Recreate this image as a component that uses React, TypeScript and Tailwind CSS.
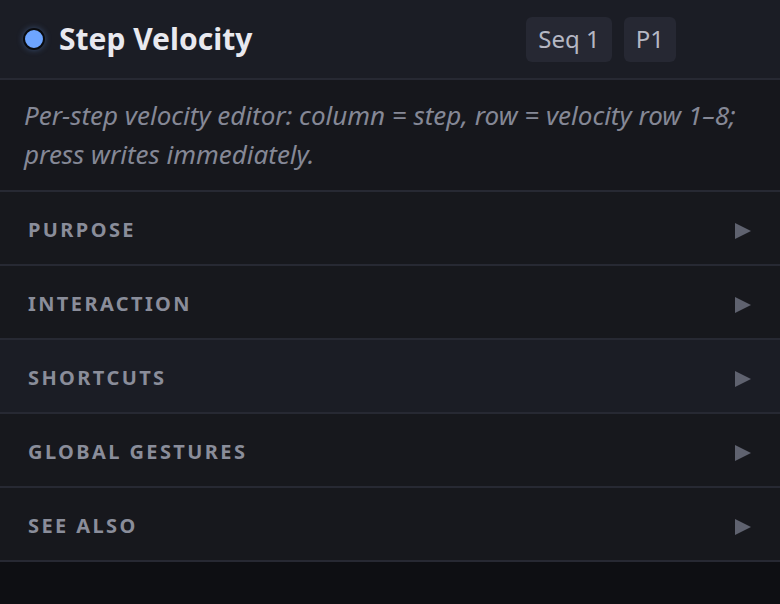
import React from "react";

const sections = ["Purpose", "Interaction", "Shortcuts", "Global Gestures", "See Also"];

function Arrow() {
  return (
    <svg width="16" height="16" viewBox="0 0 16 16" className="shrink-0 mt-[6px]">
      <polygon points="0,0 16,8 0,16" fill="#5f626f" />
    </svg>
  );
}

export default function App() {
  return (
    <div
      className="w-[780px] h-[604px] bg-[#0e0f13] flex flex-col overflow-hidden"
      style={{ fontFamily: '"Noto Sans", "Open Sans", sans-serif' }}
    >
      <div className="h-[80px] shrink-0 bg-[#1b1d25] border-b-2 border-[#272933] flex items-center pl-[23px] pr-[104px]">
        <div className="w-[22px] h-[22px] rounded-full bg-[#6ea5ff] border-2 border-[#0a0b0e] shadow-[0_0_6px_rgba(110,165,255,0.35)] shrink-0" />
        <div className="ml-[14px] flex-1 text-[30px] font-bold text-[#e9e9ef] leading-none">
          Step Velocity
        </div>
        <div className="flex gap-3">
          <div className="h-[45px] px-[12px] rounded-md bg-[#262833] text-[#b5b7c3] text-[24px] flex items-center">
            Seq 1
          </div>
          <div className="h-[45px] px-[12px] rounded-md bg-[#262833] text-[#b5b7c3] text-[24px] flex items-center">
            P1
          </div>
        </div>
      </div>
      <div className="h-[112px] shrink-0 bg-[#16171c] border-b-2 border-[#272933] px-6 flex items-center">
        <p className="italic text-[26px] leading-[39px] text-[#858896]">
          Per-step velocity editor: column = step, row = velocity row{" "}
          <span className="whitespace-nowrap">1–8;</span> press writes immediately.
        </p>
      </div>
      {sections.map((s) => (
        <div
          key={s}
          className={`h-[74px] shrink-0 border-b-2 border-[#272933] flex items-center justify-between pl-[28px] pr-[29px] ${
            s === "Shortcuts" ? "bg-[#1b1d25]" : "bg-[#17181d]"
          }`}
        >
          <span className="uppercase font-bold text-[20px] tracking-[0.12em] text-[#8a8d9a] pt-[3px]">{s}</span>
          <Arrow />
        </div>
      ))}
    </div>
  );
}
